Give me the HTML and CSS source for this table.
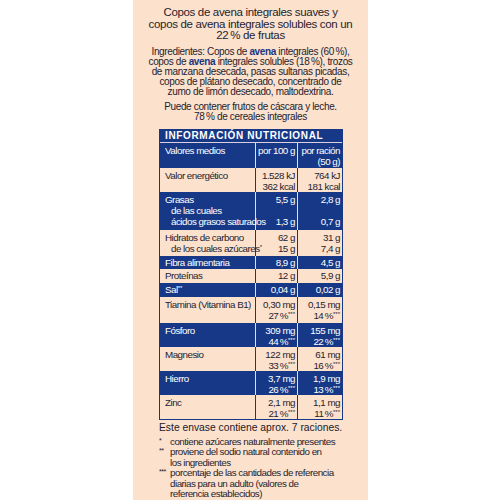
FILE: index.html
```html
<!DOCTYPE html>
<html lang="es">
<head>
<meta charset="utf-8">
<link rel="stylesheet" href="styles.css">
</head>
<body>
<div class="panel">
  <p class="title">Copos de avena integrales suaves y<br>copos de avena integrales solubles con un<br>22&#8201;% de frutas</p>
  <p class="ingr">Ingredientes: Copos de <b>avena</b> integrales (60&#8201;%),<br>copos de <b>avena</b> integrales solubles (18&#8201;%), trozos<br>de manzana desecada, pasas sultanas picadas,<br>copos de plátano desecado, concentrado de<br>zumo de limón desecado, maltodextrina.</p>
  <p class="ingr extra">Puede contener frutos de cáscara y leche.<br>78&#8201;% de cereales integrales</p>
  <table class="nut">
    <colgroup><col class="c1"><col class="c2"><col class="c3"></colgroup>
    <tr class="head"><th colspan="3">INFORMACIÓN NUTRICIONAL</th></tr>
    <tr class="blue h25"><td>Valores medios</td><td class="v">por 100 g</td><td class="v">por ración<br>(50 g)</td></tr>
    <tr class="light h23"><td>Valor energético</td><td class="v">1.528 kJ<br>362 kcal</td><td class="v">764 kJ<br>181 kcal</td></tr>
    <tr class="blue h38"><td>Grasas<br><span class="ind">de las cuales</span><br><span class="ind">ácidos grasos saturados</span></td><td class="v">5,5 g<br><br>1,3 g</td><td class="v">2,8 g<br><br>0,7 g</td></tr>
    <tr class="light h26"><td>Hidratos de carbono<br><span class="ind">de los cuales azúcares<sup>*</sup></span></td><td class="v">62 g<br>15 g</td><td class="v">31 g<br>7,4 g</td></tr>
    <tr class="blue h13"><td>Fibra alimentaria</td><td class="v">8,9 g</td><td class="v">4,5 g</td></tr>
    <tr class="light h14"><td>Proteínas</td><td class="v">12 g</td><td class="v">5,9 g</td></tr>
    <tr class="blue h14"><td>Sal<sup>**</sup></td><td class="v">0,04 g</td><td class="v">0,02 g</td></tr>
    <tr class="light h26"><td>Tiamina (Vitamina B1)</td><td class="v">0,30 mg<br>27&#8201;%<sup>***</sup></td><td class="v">0,15 mg<br>14&#8201;%<sup>***</sup></td></tr>
    <tr class="blue h23"><td>Fósforo</td><td class="v">309 mg<br>44&#8201;%<sup>***</sup></td><td class="v">155 mg<br>22&#8201;%<sup>***</sup></td></tr>
    <tr class="light h22"><td>Magnesio</td><td class="v">122 mg<br>33&#8201;%<sup>***</sup></td><td class="v">61 mg<br>16&#8201;%<sup>***</sup></td></tr>
    <tr class="blue h24"><td>Hierro</td><td class="v">3,7 mg<br>26&#8201;%<sup>***</sup></td><td class="v">1,9 mg<br>13&#8201;%<sup>***</sup></td></tr>
    <tr class="light h23"><td>Zinc</td><td class="v">2,1 mg<br>21&#8201;%<sup>***</sup></td><td class="v">1,1 mg<br>11&#8201;%<sup>***</sup></td></tr>
  </table>
  <p class="portions">Este envase contiene aprox. 7 raciones.</p>
  <ul class="notes">
    <li><span class="mark">*</span><span>contiene azúcares naturalmente presentes</span></li>
    <li><span class="mark">**</span><span>proviene del sodio natural contenido en<br>los ingredientes</span></li>
    <li><span class="mark">***</span><span>porcentaje de las cantidades de referencia<br>diarias para un adulto (valores de<br>referencia establecidos)</span></li>
  </ul>
</div>
</body>
</html>
```
FILE: styles.css
```css
html, body {
  margin: 0;
  padding: 0;
  background: #ffffff;
}
body {
  padding-left: 133px;
  font-family: "Liberation Sans", Arial, sans-serif;
  color: #1e1e2e;
}
.panel {
  width: 235px;
  height: 500px;
  background: #fce1cd;
  padding-top: 7px;
  box-sizing: border-box;
  overflow: hidden;
}
.title {
  margin: 0;
  text-align: center;
  font-size: 11.5px;
  letter-spacing: -0.33px;
  line-height: 11.5px;
  white-space: nowrap;
}
.ingr {
  margin: 5px 0 0;
  text-align: center;
  font-size: 10px;
  letter-spacing: -0.36px;
  line-height: 10px;
  white-space: nowrap;
}
.ingr b {
  color: #1b3580;
}
.ingr.extra {
  margin-top: 5px;
}
.nut {
  margin: 7px 0 0 26px;
  width: 184px;
  table-layout: fixed;
  border-collapse: separate;
  border-spacing: 0;
  border: 1px solid #173887;
  font-size: 9.8px;
  letter-spacing: -0.5px;
  line-height: 11px;
}
.c1 { width: 95px; }
.c2 { width: 42px; }
.c3 { width: 45px; }
.nut th {
  background: #173887;
  color: #ffffff;
  text-align: left;
  font-size: 10px;
  font-weight: bold;
  letter-spacing: 0.65px;
  padding: 0 0 0 5px;
  height: 12px;
  line-height: 12px;
  border-bottom: 1px solid #d9d2dc;
}
.nut td {
  vertical-align: top;
  padding: 2px 0 0 5px;
  white-space: nowrap;
}
.nut td.v {
  text-align: right;
  padding: 2px 2px 0 0;
  border-left: 1px solid #173887;
}
.nut tr.blue td {
  background: #173887;
  color: #ffffff;
}
.nut tr.blue td.v {
  border-left-color: #e6dde3;
}
.nut tr.light td {
  background: #fce1cd;
  color: #1e1e2e;
}
.nut sup {
  font-size: 6px;
  letter-spacing: 0;
  line-height: 0;
  vertical-align: 3px;
}
.ind { padding-left: 6px; }
.h13 { height: 13px; }
.h14 { height: 14px; }
.h22 { height: 22px; }
.h23 { height: 23px; }
.h24 { height: 24px; }
.h25 { height: 25px; }
.h26 { height: 26px; }
.h38 { height: 38px; }
.h13 td, .h14 td { padding-top: 1px !important; }
.portions {
  margin: 2px 0 0 26px;
  font-size: 10.3px;
  line-height: 11px;
  color: #1a1a2a;
}
.notes {
  list-style: none;
  margin: 4px 0 0 26px;
  padding: 0;
  width: 200px;
  font-size: 9.8px;
  letter-spacing: -0.5px;
  line-height: 10.5px;
  white-space: nowrap;
}
.notes li {
  display: flex;
}
.notes .mark {
  flex: 0 0 11px;
  font-size: 7px;
  line-height: 8px;
  letter-spacing: -0.5px;
}
```
